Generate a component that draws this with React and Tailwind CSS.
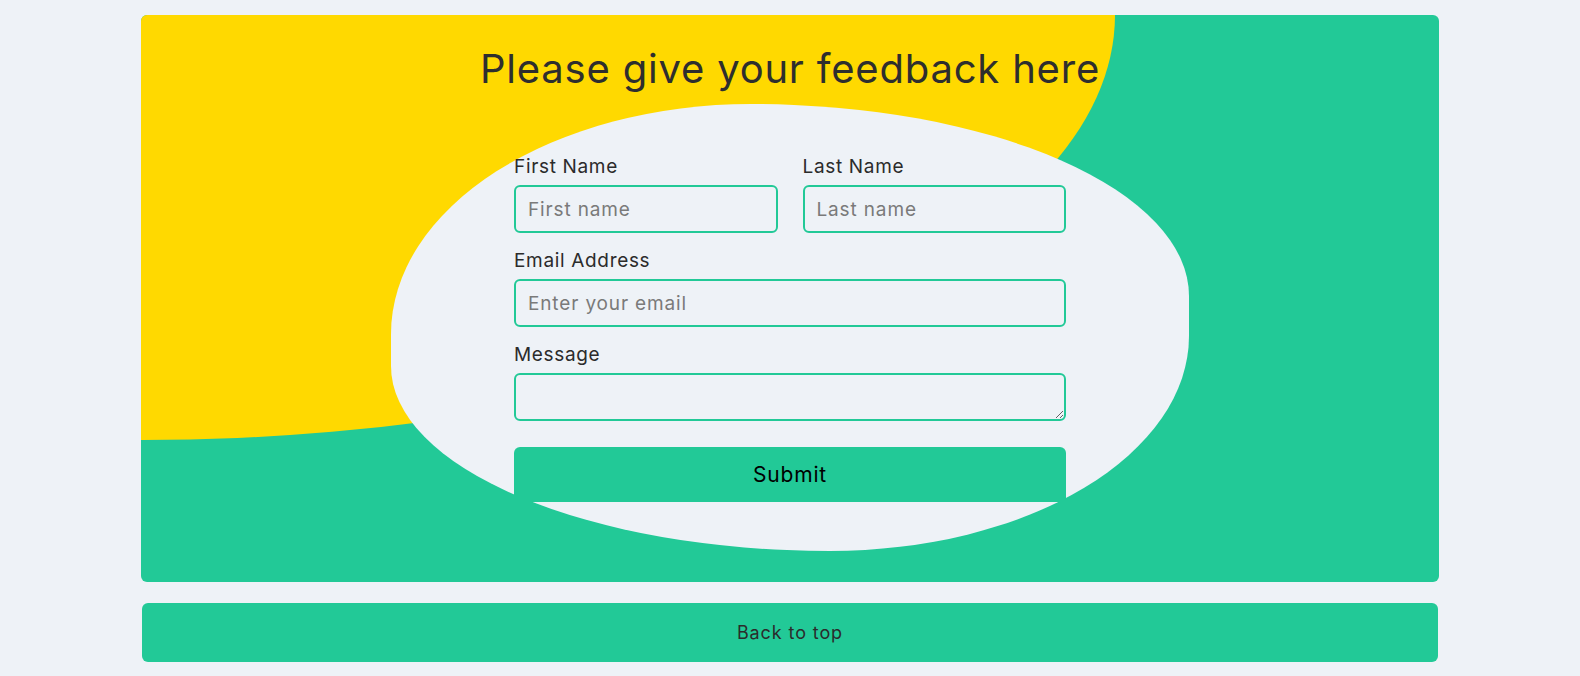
import React from "react";

const font = { fontFamily: "Inter, 'Noto Sans', sans-serif" };

const Field = ({ label, placeholder, className }) => (
    <div className={"flex flex-col " + (className || "")}>
        <label className="text-[19px] leading-6 tracking-[0.035em] text-[#2b2b2b]">{label}</label>
        <input
            type="text"
            placeholder={placeholder}
            className="mt-[6px] h-12 w-full rounded-md border-2 border-[#22c997] bg-transparent px-3 text-[19px] tracking-[0.045em] text-[#2b2b2b] placeholder:text-[#7a7a7a] outline-none"
        />
    </div>
);

const App = () => {
    return (
        <div className="min-h-screen bg-[#eef2f7] pt-[15px] pb-4" style={font}>
            <div className="relative mx-auto h-[567px] w-[1298px] overflow-hidden rounded-md bg-[#22c997]">
                {/* background shapes */}
                <div className="absolute left-0 top-0 h-3/4 w-3/4 rounded-br-[100%] bg-[#ffd900]"></div>
                <div className="absolute left-[250px] top-[89px] h-[447px] w-[798px] rounded-tl-[360px_230px] rounded-tr-[438px_192px] rounded-br-[359px_215px] rounded-bl-[439px_185px] bg-[#eef2f7]"></div>

                <div className="relative z-10 flex flex-col items-center pt-[30px]">
                    <h1 className="text-[40px] leading-[48px] tracking-[0.02em] text-[#2e2e2e]">Please give your feedback here</h1>

                    <form className="mt-[62px] flex w-[552px] flex-col" onSubmit={(e) => e.preventDefault()}>
                        <div className="flex gap-[25px]">
                            <Field label="First Name" placeholder="First name" className="flex-1" />
                            <Field label="Last Name" placeholder="Last name" className="flex-1" />
                        </div>

                        <Field label="Email Address" placeholder="Enter your email" className="mt-4" />

                        <div className="mt-4 flex flex-col">
                            <label className="text-[19px] leading-6 tracking-[0.035em] text-[#2b2b2b]">Message</label>
                            <textarea className="mt-[6px] block h-12 w-full rounded-md border-2 border-[#22c997] bg-transparent px-3 py-2 text-[19px] outline-none"></textarea>
                        </div>

                        <button className="mt-[26px] h-[55px] w-full rounded-t-md bg-[#22c997] text-[21px] tracking-[0.04em] text-black">
                            Submit
                        </button>
                    </form>
                </div>
            </div>

            <button className="mx-auto mt-[21px] block h-[59px] w-[1296px] rounded-md bg-[#22c997] text-[18px] tracking-[0.05em] text-[#2b2b2b]">
                Back to top
            </button>
        </div>
    );
};

export default App;
